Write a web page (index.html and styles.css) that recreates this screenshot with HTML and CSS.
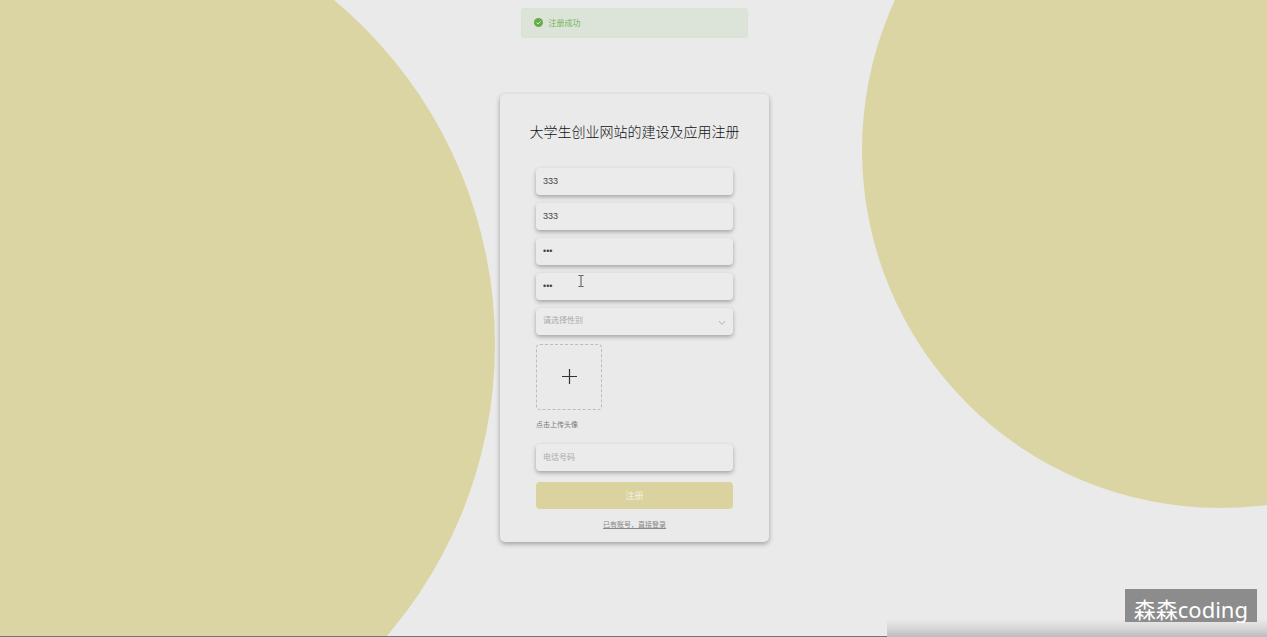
FILE: index.html
```html
<!DOCTYPE html>
<html lang="zh-CN">
<head>
<meta charset="utf-8">
<meta name="viewport" content="width=device-width, initial-scale=1">
<title>大学生创业网站的建设及应用注册</title>
<link rel="stylesheet" href="styles.css">
</head>
<body>
<div class="page">
  <div class="circle circle-left"></div>
  <div class="circle circle-right"></div>

  <div class="toast" role="status">
    <svg class="toast-icon" viewBox="0 0 18 18" aria-hidden="true">
      <circle cx="9" cy="9" r="9" fill="#67ab45"/>
      <path d="M5 9.2l3 2.8 5.2-5.4" fill="none" stroke="#e6eee0" stroke-width="1.8"/>
    </svg>
    <span>注册成功</span>
  </div>

  <main class="card">
    <h1 class="title">大学生创业网站的建设及应用注册</h1>
    <form class="form">
      <input class="field" type="text" value="333" aria-label="账号">
      <input class="field" type="text" value="333" aria-label="姓名">
      <input class="field" type="password" value="333" aria-label="密码">
      <div class="field-wrap">
        <input class="field" type="password" value="333" aria-label="确认密码">
        <svg class="caret" viewBox="0 0 6 12" aria-hidden="true">
          <path d="M0.5 .5H2.5L3 1L3.5 .5H5.5M3 1V11M.5 11.5H2.5L3 11L3.5 11.5H5.5" fill="none" stroke="#555" stroke-width="1"/>
        </svg>
      </div>
      <div class="field-wrap">
        <select class="field select" aria-label="性别">
          <option value="">请选择性别</option>
          <option>男</option>
          <option>女</option>
        </select>
        <svg class="chevron" viewBox="0 0 8 6" aria-hidden="true">
          <path d="M1 1l3 3.5L7 1" fill="none" stroke="#b0b2b5" stroke-width="1"/>
        </svg>
      </div>
      <div class="upload">
        <label class="upload-box" for="avatar">
          <svg class="plus" viewBox="0 0 15 15" aria-hidden="true">
            <path d="M0 7.5H15M7.5 0V15" stroke="#333" stroke-width="1.2"/>
          </svg>
        </label>
        <input class="file" id="avatar" type="file" aria-label="上传头像">
        <span class="upload-tip">点击上传头像</span>
      </div>
      <input class="field" type="tel" placeholder="电话号码" aria-label="电话号码">
      <button class="submit" type="button">注册</button>
      <a class="login" href="#">已有账号，直接登录</a>
    </form>
  </main>

  <div class="edge-line"></div>
  <div class="edge-shade"></div>
  <div class="watermark">森森coding</div>
</div>
</body>
</html>
```
FILE: styles.css
```css
* {
  box-sizing: border-box;
}

body {
  margin: 0;
  font-family: "Liberation Sans", "Noto Sans CJK SC", sans-serif;
  font-size: 8px;
  color: #444;
  background: #eaeaea;
}

.page {
  position: relative;
  display: flex;
  align-items: center;
  justify-content: center;
  min-height: 100vh;
  padding: 0 0 2px 2px;
  overflow: hidden;
}

.circle {
  position: absolute;
  border-radius: 50%;
  background: #dbd5a4;
}

.circle-left {
  left: -401px;
  top: -104px;
  width: 896px;
  height: 896px;
}

.circle-right {
  right: -311px;
  top: -208px;
  width: 716px;
  height: 716px;
}

.toast {
  position: absolute;
  top: 8px;
  left: 50%;
  display: flex;
  align-items: center;
  gap: 6px;
  width: 227px;
  height: 30px;
  margin-left: -113px;
  padding: 0 12px 2px;
  border: 1px solid #d9e3d2;
  border-radius: 3px;
  background: #dce4da;
  color: #74b355;
}

.toast-icon {
  width: 9px;
  height: 9px;
}

.card {
  position: relative;
  width: 269px;
  padding: 24px 36px 10px;
  border-radius: 5px;
  background: #eaeaea;
  box-shadow: 0 2px 5px rgba(0, 0, 0, 0.32);
}

.title {
  display: flex;
  justify-content: center;
  margin: 0 0 22px;
  font-size: 14px;
  font-weight: 300;
  line-height: 28px;
  white-space: nowrap;
  color: #111;
}

.form {
  display: flex;
  flex-direction: column;
  gap: 8px;
}

.field {
  display: block;
  width: 100%;
  height: 27px;
  padding: 0 7px 1px;
  border: 0;
  border-radius: 4px;
  outline: 0;
  background: #ebebeb;
  box-shadow: 0 2px 4px rgba(0, 0, 0, 0.3);
  font-family: inherit;
  font-size: 9px;
  color: #444;
}

.field::placeholder {
  font-size: 8px;
  color: #aaa;
}

.field-wrap {
  position: relative;
}

.select {
  appearance: none;
  font-size: 8px;
  color: #aaa;
}

.chevron {
  position: absolute;
  top: 12px;
  right: 7px;
  width: 8px;
  height: 6px;
}

.caret {
  position: absolute;
  top: 2px;
  left: 42px;
  width: 6px;
  height: 12px;
}

.upload {
  display: flex;
  flex-direction: column;
  align-items: flex-start;
  margin-top: 1px;
  padding-bottom: 4px;
}

.upload-box {
  display: flex;
  align-items: center;
  justify-content: center;
  width: 66px;
  height: 66px;
  margin-bottom: 8px;
  border: 1px dashed #bcbcbc;
  border-radius: 4px;
  cursor: pointer;
}

.plus {
  width: 15px;
  height: 15px;
}

.file {
  display: none;
}

.upload-tip {
  font-size: 7px;
  line-height: 14px;
  color: #777;
}

.submit {
  height: 27px;
  margin-top: 3px;
  padding: 0;
  border: 0;
  border-radius: 4px;
  background: #dad3a0;
  font-family: inherit;
  font-size: 9px;
  color: #f2efdc;
}

.login {
  align-self: center;
  margin-top: 1px;
  font-size: 7px;
  line-height: 14px;
  color: #888;
}

.edge-line {
  position: absolute;
  bottom: 0;
  left: 0;
  width: 70%;
  height: 1px;
  background: #757575;
}

.edge-shade {
  position: absolute;
  right: 0;
  bottom: 0;
  width: 30%;
  height: 18px;
  background: linear-gradient(#eaeaea, #d8d8d8 50%, #bdbdbd);
}

.watermark {
  position: absolute;
  right: 10px;
  bottom: 15px;
  height: 33px;
  padding: 0 9px;
  background: #8c8c8c;
  font-family: "Noto Sans", "Noto Sans CJK SC", sans-serif;
  font-size: 22px;
  line-height: 40px;
  color: #fff;
}
```
